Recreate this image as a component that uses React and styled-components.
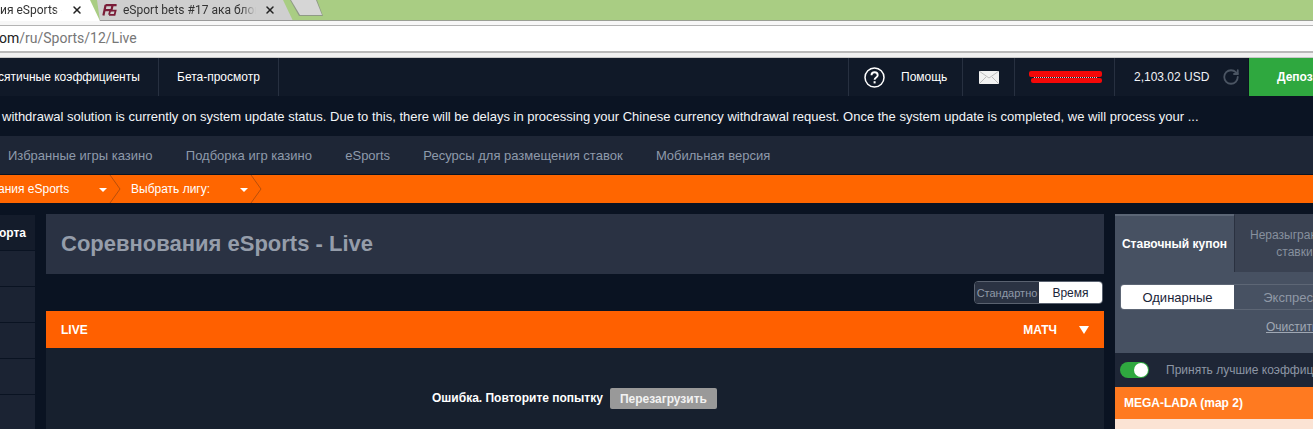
import React from 'react';
import styled, { createGlobalStyle } from 'styled-components';
import { RotateCw, X } from 'lucide-react';

const GlobalStyle = createGlobalStyle`
  html, body {
    margin: 0;
    padding: 0;
    background: #0a1322;
    overflow: hidden;
  }
  * { box-sizing: border-box; }
`;

const Page = styled.div`
  width: 1313px;
  height: 429px;
  overflow: hidden;
  background: #0a1322;
  font-family: "Liberation Sans", Arial, sans-serif;
  display: flex;
  flex-direction: column;
`;

/* browser chrome */
const TabStrip = styled.div`
  height: 21px;
  flex: none;
  display: flex;
  background: linear-gradient(#a9cd83 20px, #9a9f94 20px);
  font-family: Roboto, sans-serif;
  font-size: 12px;
  color: #333;
`;

const Tab = styled.div`
  flex: none;
  height: 21px;
  width: ${p => p.$w}px;
  margin-left: ${p => p.$ml || 0}px;
  padding: 0 0 1px ${p => p.$pl}px;
  display: flex;
  align-items: center;
  white-space: nowrap;
  overflow: hidden;
  background: ${p => p.$active ? '#fff' : 'linear-gradient(#cfcfcf 20px, #9a9a9a 20px)'};
  clip-path: ${p => p.$clip};
`;

const TabTitle = styled.span`
  display: block;
  width: ${p => p.$w}px;
  overflow: hidden;
  flex: none;
  margin-left: ${p => p.$ml || 0}px;
  -webkit-mask-image: linear-gradient(to right, #000 88%, transparent);
  mask-image: linear-gradient(to right, #000 88%, transparent);
`;

const NewTab = styled.div`
  flex: none;
  width: 33px;
  height: 16px;
  margin-left: -3px;
  background: #8f9a86;
  clip-path: polygon(0 0, 27px 0, 33px 16px, 9px 16px);
  padding: 0 1px 1px 1px;
`;

const NewTabFace = styled.div`
  width: 100%;
  height: 100%;
  background: #d6d6d6;
  clip-path: polygon(0 0, 25px 0, 31px 15px, 9px 15px);
`;

const TabClose = styled(X)`
  flex: none;
  margin-left: ${p => p.$ml}px;
  color: #222;
`;

const ToolbarGap = styled.div`
  height: 5px;
  flex: none;
  background: #f7f7f7;
  border-bottom: 1px solid #b4b4b4;
`;

const Address = styled.div`
  height: 27px;
  flex: none;
  display: flex;
  align-items: center;
  background: #fff;
  border-bottom: 2px solid #b9b9b9;
  font-family: Roboto, sans-serif;
  font-size: 14px;
  color: #777;
  white-space: nowrap;
  overflow: hidden;
  padding-bottom: 1px;
`;

const Host = styled.span`
  color: #222;
  margin-left: -1px;
`;

const ChromeEdge = styled.div`
  height: 5px;
  flex: none;
  background: #f0f0f0;
  border-bottom: 1px solid #c8c8c8;
`;

/* site header */
const TopBar = styled.div`
  height: 38px;
  flex: none;
  display: flex;
  background: #101928;
  color: #fff;
  font-size: 12px;
`;

const TopCell = styled.div`
  flex: none;
  width: ${p => p.$w}px;
  height: 100%;
  display: flex;
  align-items: center;
  justify-content: ${p => p.$center ? 'center' : 'flex-start'};
  gap: ${p => p.$gap || 0}px;
  padding-left: ${p => p.$pl || 0}px;
  border-right: ${p => p.$flat ? 'none' : '1px solid #273040'};
  white-space: nowrap;
  overflow: hidden;
`;

const Clipped = styled.span`
  margin-left: ${p => p.$ml}px;
`;

const TopSpacer = styled.div`
  flex: 1;
  border-right: 1px solid #273040;
`;

const Masked = styled.div`
  position: relative;
  width: 74px;
  height: 13px;
  margin-left: 3px;
`;

const RedMark = styled.div`
  position: absolute;
  left: ${p => p.$l}px;
  top: ${p => p.$t}px;
  width: ${p => p.$w}px;
  height: ${p => p.$h}px;
  background: #f40808;
  border-radius: 2px;
`;

const HiddenName = styled.div`
  position: absolute;
  left: 5px;
  right: 6px;
  top: 6px;
  border-top: 1px dotted #d8c8c8;
`;

const Balance = styled.span`
  font-size: 12px;
  color: #f0f3f7;
`;

const Deposit = styled.div`
  flex: none;
  width: 65px;
  height: 100%;
  background: #2fa83f;
  font-size: 12px;
  font-weight: bold;
  display: flex;
  align-items: center;
  padding-left: 28px;
  overflow: hidden;
  white-space: nowrap;
  border-left: 1px solid #0c1320;
`;

const Notice = styled.div`
  height: 40px;
  flex: none;
  display: flex;
  align-items: center;
  background: #0b1423;
  color: #f3f5f8;
  font-size: 13px;
  padding-left: 2px;
  white-space: nowrap;
  overflow: hidden;
`;

const Nav = styled.div`
  height: 38px;
  flex: none;
  display: flex;
  align-items: center;
  gap: 33.3px;
  padding-left: 8px;
  background: #1e2636;
  color: #8e9aab;
  font-size: 13px;
  white-space: nowrap;
`;

const Crumbs = styled.div`
  height: 28px;
  flex: none;
  margin-top: 1px;
  display: flex;
  align-items: center;
  background: #ff6600;
  color: #fff;
  font-size: 12px;
  white-space: nowrap;
`;

const Crumb = styled.div`
  flex: none;
  width: ${p => p.$w}px;
  height: 100%;
  display: flex;
  align-items: center;
  padding-left: ${p => p.$pl}px;
  position: relative;
  overflow: hidden;
`;

const Caret = styled.span`
  position: absolute;
  right: ${p => p.$r}px;
  top: 13px;
  width: 0;
  height: 0;
  border-left: 4px solid transparent;
  border-right: 4px solid transparent;
  border-top: 4px solid #fff;
`;

const CrumbArrow = styled.svg`
  position: absolute;
  right: 0;
  top: 0;
`;

/* three columns */
const Columns = styled.div`
  flex: 1;
  min-height: 0;
  display: flex;
  padding-top: 11px;
`;

const Side = styled.div`
  flex: none;
  width: 35px;
  display: flex;
  flex-direction: column;
  gap: 1px;
  margin: 1px 11px 0 0;
`;

const SideHead = styled.div`
  height: 35px;
  flex: none;
  background: #141c2b;
  color: #fff;
  font-size: 12px;
  font-weight: bold;
  display: flex;
  align-items: center;
  justify-content: flex-end;
  padding-right: 9px;
`;

const SideRow = styled.div`
  height: 35px;
  flex: none;
  background: #1b2333;
`;

const Main = styled.div`
  flex: none;
  width: 1058px;
  display: flex;
  flex-direction: column;
  margin-right: 11px;
`;

const TitleBox = styled.div`
  height: 60px;
  flex: none;
  background: #2a3243;
  color: #959daa;
  font-size: 22px;
  font-weight: bold;
  display: flex;
  align-items: center;
  padding-left: 15px;
`;

const ViewRow = styled.div`
  height: 37px;
  flex: none;
  display: flex;
  justify-content: flex-end;
  align-items: flex-start;
  padding: 7px 1px 0 0;
`;

const ViewSwitch = styled.div`
  width: 129px;
  height: 23px;
  display: flex;
  border: 1px solid #5a6270;
  border-radius: 4px;
  overflow: hidden;
`;

const ViewOption = styled.div`
  flex: none;
  width: ${p => p.$w}px;
  display: flex;
  align-items: center;
  justify-content: center;
  font-size: ${p => p.$on ? 12 : 11}px;
  background: ${p => p.$on ? '#fff' : '#2b3343'};
  color: ${p => p.$on ? '#1a2438' : '#8f99a8'};
`;

const LiveBar = styled.div`
  height: 37px;
  flex: none;
  background: #ff6000;
  color: #fff;
  font-size: 12px;
  font-weight: bold;
  display: flex;
  align-items: center;
  justify-content: space-between;
  padding: 0 15px 0 15px;
`;

const LiveRight = styled.div`
  display: flex;
  align-items: center;
  gap: 22px;
`;

const LiveCaret = styled.span`
  width: 0;
  height: 0;
  border-left: 5px solid transparent;
  border-right: 5px solid transparent;
  border-top: 8px solid #fff;
`;

const Content = styled.div`
  flex: 1;
  background: #17202e;
  display: flex;
  justify-content: flex-start;
  align-items: flex-start;
  gap: 7px;
  padding: 40px 0 0 386px;
  color: #fff;
  font-size: 12px;
  font-weight: bold;
`;

const ErrorText = styled.span`
  line-height: 20px;
`;

const Reload = styled.div`
  width: 107px;
  height: 21px;
  background: #999;
  color: #f2f2f2;
  border-radius: 2px;
  display: flex;
  align-items: center;
  justify-content: center;
`;

/* bet slip */
const Slip = styled.div`
  flex: 1;
  min-width: 0;
  display: flex;
  flex-direction: column;
`;

const SlipTabs = styled.div`
  height: 58px;
  flex: none;
  display: flex;
  font-size: 12px;
`;

const SlipTab = styled.div`
  flex: none;
  width: ${p => p.$w}px;
  display: flex;
  align-items: center;
  justify-content: ${p => p.$on ? 'center' : 'flex-start'};
  padding-left: ${p => p.$on ? 0 : 15}px;
  white-space: nowrap;
  overflow: hidden;
  background: ${p => p.$on ? '#475162' : '#3a4252'};
  color: ${p => p.$on ? '#fff' : '#87909e'};
  font-weight: ${p => p.$on ? 'bold' : 'normal'};
  border-top: 2px solid ${p => p.$on ? '#5c6676' : '#3a4252'};
  border-left: ${p => p.$on ? 'none' : '1px solid #2a3140'};
`;

const SlipTabLabel = styled.div`
  flex: none;
  text-align: center;
  line-height: 17px;
`;

const SlipBody = styled.div`
  height: 81px;
  flex: none;
  background: #475162;
  padding-top: 12px;
`;

const SlipSwitch = styled.div`
  display: flex;
  height: 26px;
  margin-left: 5px;
  font-size: 13px;
  border: 1px solid #5d6675;
  border-right: none;
  border-radius: 4px 0 0 4px;
  overflow: hidden;
`;

const SlipOption = styled.div`
  flex: none;
  width: ${p => p.$w}px;
  display: flex;
  align-items: center;
  justify-content: center;
  white-space: nowrap;
  background: ${p => p.$on ? '#fff' : 'transparent'};
  color: ${p => p.$on ? '#1a2438' : '#8f98a6'};
`;

const ClearLink = styled.div`
  margin-top: 10px;
  padding-left: 151px;
  font-size: 12px;
  color: #a0a8b4;
  text-decoration: underline;
  white-space: nowrap;
  overflow: hidden;
`;

const OddsRow = styled.div`
  height: 34px;
  flex: none;
  background: #1e2636;
  display: flex;
  align-items: center;
  gap: 17px;
  padding-left: 5px;
  font-size: 12px;
  color: #8d96a5;
  white-space: nowrap;
  overflow: hidden;
`;

const Toggle = styled.div`
  flex: none;
  width: 29px;
  height: 16px;
  border-radius: 8px;
  background: #2fa83f;
  display: flex;
  justify-content: flex-end;
  padding: 1px;
`;

const Knob = styled.div`
  width: 14px;
  height: 14px;
  border-radius: 50%;
  background: #fff;
`;

const MatchHead = styled.div`
  height: 32px;
  flex: none;
  background: #ff7a20;
  color: #fff;
  font-size: 12px;
  font-weight: bold;
  display: flex;
  align-items: center;
  padding: 0 0 1px 9px;
`;

const MatchBody = styled.div`
  flex: 1;
  background: #fbe3d4;
`;

const LogoSvg = styled.svg`
  flex: none;
`;

const TeamLogo = () => (
  <LogoSvg width="15" height="12" viewBox="0 0 15 12" fill="none" stroke="#7a1c38" strokeWidth="2.2">
    <path d="M3.5 1.2H14.6M3.6 1 1.4 11.5M3.4 6.2H9.4L10.6 1.2" />
    <path d="M7 10.8H12.6L13.6 6.6H8.2L7 10.8" strokeWidth="1.8" />
  </LogoSvg>
);

const HelpIcon = () => (
  <svg width="21" height="21" viewBox="0 0 21 21" fill="none" stroke="#fff">
    <circle cx="10.5" cy="10.5" r="9.5" strokeWidth="1.5" />
    <path d="M7.5 8.2c0-4 6.2-4 6.2 0 0 2.4-3.1 2.2-3.1 4.6" strokeWidth="1.9" />
    <path d="M10.6 14.2v2.2" strokeWidth="2" />
  </svg>
);

const MailIcon = () => (
  <svg width="20" height="13" viewBox="0 0 20 13">
    <rect width="20" height="13" fill="#f2f2f2" />
    <path d="M0 0l10 7 10-7M0 13l7-7M20 13l-7-7" fill="none" stroke="#bdbdbd" />
  </svg>
);

const Arrow = () => (
  <CrumbArrow width="12" height="28" viewBox="0 0 12 28" fill="none" stroke="#b94f0a">
    <path d="M1 0l10 14L1 28" />
  </CrumbArrow>
);

export default function App() {
  return (
    <Page>
      <GlobalStyle />
      <TabStrip>
        <Tab $active $w={100} $pl={0} $clip="polygon(0 0, 90px 0, 100px 21px, 0 21px)">
          <TabTitle $w={62}>ия eSports - </TabTitle>
          <TabClose $ml={9} size={12} strokeWidth={3} />
        </Tab>
        <Tab $w={196} $ml={-3} $pl={5} $clip="polygon(0 0, 186px 0, 196px 21px, 3px 21px)">
          <TeamLogo />
          <TabTitle $w={133} $ml={6}>eSport bets #17 ака блог</TabTitle>
          <TabClose $ml={8} size={12} strokeWidth={3} />
        </Tab>
        <NewTab><NewTabFace /></NewTab>
      </TabStrip>
      <ToolbarGap />
      <Address><Host>om</Host>/ru/Sports/12/Live</Address>
      <ChromeEdge />

      <TopBar>
        <TopCell $w={159}><Clipped $ml={-2}>сятичные коэффициенты</Clipped></TopCell>
        <TopCell $w={120} $pl={18}>Бета-просмотр</TopCell>
        <TopSpacer />
        <TopCell $w={114} $pl={15} $gap={16}><HelpIcon />Помощь</TopCell>
        <TopCell $w={52} $center><MailIcon /></TopCell>
        <TopCell $w={100} $center>
          <Masked>
            <HiddenName />
            <RedMark $l={0} $t={0} $w={73} $h={6} />
            <RedMark $l={2} $t={7} $w={71} $h={5} />
          </Masked>
        </TopCell>
        <TopCell $w={133} $pl={19} $gap={13} $flat>
          <Balance>2,103.02 USD</Balance>
          <RotateCw size={18} color="#4b5563" strokeWidth={2.4} />
        </TopCell>
        <Deposit>Депозит</Deposit>
      </TopBar>

      <Notice>withdrawal solution is currently on system update status. Due to this, there will be delays in processing your Chinese currency withdrawal request. Once the system update is completed, we will process your ...</Notice>

      <Nav>
        <span>Избранные игры казино</span>
        <span>Подборка игр казино</span>
        <span>eSports</span>
        <span>Ресурсы для размещения ставок</span>
        <span>Мобильная версия</span>
      </Nav>

      <Crumbs>
        <Crumb $w={121} $pl={0}><Clipped $ml={-2}>ания eSports</Clipped><Caret $r={14} /><Arrow /></Crumb>
        <Crumb $w={141} $pl={10}>Выбрать лигу:<Caret $r={14} /><Arrow /></Crumb>
      </Crumbs>

      <Columns>
        <Side>
          <SideHead>орта</SideHead>
          <SideRow />
          <SideRow />
          <SideRow />
          <SideRow />
          <SideRow />
        </Side>
        <Main>
          <TitleBox>Соревнования eSports - Live</TitleBox>
          <ViewRow>
            <ViewSwitch>
              <ViewOption $w={64}>Стандартно</ViewOption>
              <ViewOption $w={63} $on>Время</ViewOption>
            </ViewSwitch>
          </ViewRow>
          <LiveBar>
            <span>LIVE</span>
            <LiveRight><span>МАТЧ</span><LiveCaret /></LiveRight>
          </LiveBar>
          <Content>
            <ErrorText>Ошибка. Повторите попытку</ErrorText>
            <Reload>Перезагрузить</Reload>
          </Content>
        </Main>
        <Slip>
          <SlipTabs>
            <SlipTab $w={119} $on>Ставочный купон</SlipTab>
            <SlipTab $w={79}>
              <SlipTabLabel>Неразыгранные<br />ставки</SlipTabLabel>
            </SlipTab>
          </SlipTabs>
          <SlipBody>
            <SlipSwitch>
              <SlipOption $w={113} $on>Одинарные</SlipOption>
              <SlipOption $w={124}>Экспрессы</SlipOption>
            </SlipSwitch>
            <ClearLink>Очистить все</ClearLink>
          </SlipBody>
          <OddsRow>
            <Toggle><Knob /></Toggle>
            Принять лучшие коэффициенты
          </OddsRow>
          <MatchHead>MEGA-LADA (map 2)</MatchHead>
          <MatchBody />
        </Slip>
      </Columns>
    </Page>
  );
}
